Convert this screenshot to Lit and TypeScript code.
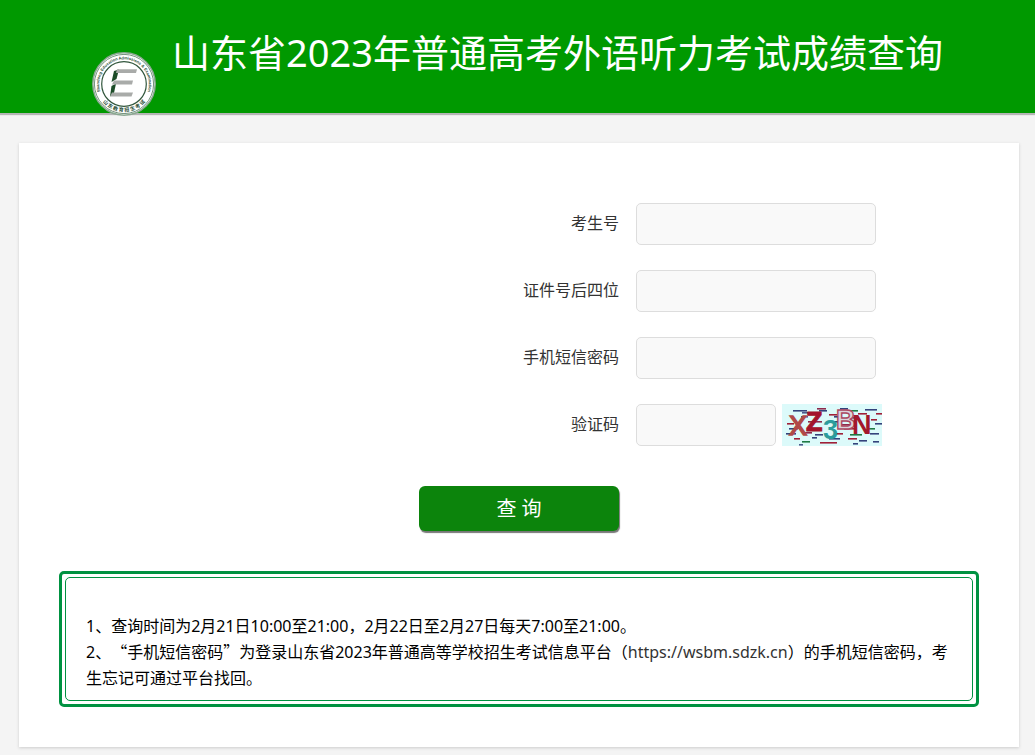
import { LitElement, html, svg, css } from "lit";
import { customElement, state } from "lit/decorators.js";

// Interference strokes of the verification image: x, y, width, colour.
const NOISE: [number, number, number, string][] = [
  [11, 6, 14, "#34437c"], [20, 8, 8, "#4d5a8c"], [35, 4, 9, "#8c2a4c"],
  [37, 6, 8, "#34437c"], [58, 4, 8, "#34437c"], [68, 6, 8, "#1f7a45"],
  [83, 5, 12, "#34437c"], [94, 9, 6, "#a02038"], [47, 10, 8, "#a02038"],
  [52, 12, 4, "#34437c"], [76, 9, 9, "#a02038"], [19, 12, 7, "#4d5a8c"],
  [65, 13, 9, "#34437c"], [89, 15, 6, "#a02038"],
  [93, 19, 7, "#34437c"], [5, 19, 7, "#a02038"], [26, 17, 14, "#8c2a4c"],
  [49, 17, 9, "#34437c"], [57, 20, 15, "#8c2a4c"], [7, 24, 9, "#34437c"],
  [62, 24, 12, "#a02038"], [85, 24, 8, "#1f7a45"],
  [4, 29, 10, "#34437c"], [22, 28, 8, "#8c2a4c"], [33, 30, 8, "#34437c"],
  [54, 29, 7, "#a02038"], [68, 30, 12, "#1f7a45"], [88, 29, 9, "#34437c"],
  [12, 34, 6, "#a02038"], [30, 33, 5, "#34437c"], [47, 34, 11, "#34437c"],
  [66, 34, 9, "#a02038"], [77, 36, 8, "#34437c"], [20, 37, 8, "#1f7a45"],
  [38, 38, 17, "#a02038"], [71, 39, 5, "#34437c"], [91, 37, 6, "#34437c"],
  [17, 40, 4, "#4d5a8c"],
];

@customElement("exam-emblem")
class ExamEmblem extends LitElement {
  static styles = css`
    :host { display: block; }
    .emblem { display: block; width: 64px; height: 64px; }
    .latin { font-family: "Liberation Sans", sans-serif; font-size: 4px; font-weight: 700; fill: #264c33; }
    .han { font-family: "Noto Sans CJK SC", sans-serif; font-size: 5px; font-weight: 700; fill: #264c33; }
  `;

  render() {
    return html`
      <svg class="emblem" viewBox="0 0 64 64" role="img" aria-label="山东教育招生考试">
        <defs>
          <path id="upper" d="M 10.5 44.5 A 24.8 24.8 0 1 1 53.5 44.5"></path>
          <path id="lower" d="M 8.5 47 A 28 28 0 0 0 55.5 47"></path>
        </defs>
        <circle cx="32" cy="32" r="31.2" fill="#fff" stroke="#8aa891" stroke-width="1.5"></circle>
        <circle cx="32" cy="32" r="29.6" fill="none" stroke="#4d7358" stroke-width=".8"></circle>
        <circle cx="32" cy="32" r="22.3" fill="#fff" stroke="#31563c" stroke-width="1.2"></circle>
        <text class="latin" text-anchor="middle"><textPath href="#upper" startOffset="50%">Shandong Education Admissions &amp; Examination</textPath></text>
        <text class="han" text-anchor="middle"><textPath href="#lower" startOffset="50%">山 东 教 育 招 生 考 试</textPath></text>
        <path d="M22 19 L27 17.5 L24.5 27 L19.5 30 Z" fill="#1c4c28"></path>
        <path d="M19.5 34 L24 31.5 L22 41 L18 44.5 Z" fill="#1c4c28"></path>
        <path d="M25 17.2 H45 L44 21 H24 Z" fill="#a9aba9"></path>
        <path d="M22 28.6 H41 L40 32.4 H20 Z" fill="#a9aba9"></path>
        <path d="M20 40.4 H41 L39.5 44.6 H18 Z" fill="#a9aba9"></path>
      </svg>
    `;
  }
}

@customElement("verify-image")
class VerifyImage extends LitElement {
  static styles = css`
    :host { display: block; }
    .image { display: block; width: 100px; height: 42px; }
    .glyph { font-family: "Liberation Sans", sans-serif; font-weight: 700; font-size: 27px; }
    .thin { font-weight: 400; }
  `;

  render() {
    return html`
      <svg class="image" viewBox="0 0 100 42" role="img" aria-label="验证码图片">
        <rect width="100" height="42" fill="#dcfafa"></rect>
        ${NOISE.map(([x, y, w, c]) => svg`<rect x=${x} y=${y} width=${w} height="1.6" fill=${c}></rect>`)}
        <text class="glyph thin" x="7" y="31" fill="#b04a48" stroke="#b04a48" stroke-width="1.6">X</text>
        <text class="glyph" x="24" y="27" fill="#a3142c" stroke="#a3142c">Z</text>
        <text class="glyph" x="41" y="35" fill="#2c9c9c">3</text>
        <text class="glyph" x="54" y="25" fill="#dcd4dc" stroke="#ab4862" stroke-width="1.4">B</text>
        <text class="glyph" x="70" y="30" fill="#a3182c">N</text>
      </svg>
    `;
  }
}

@customElement("app-root")
class AppRoot extends LitElement {
  static styles = css`
    :host {
      display: block;
      min-height: 100vh;
      background: #f4f4f4;
      color: #333;
      font: 16px/26px "Noto Sans", "Noto Sans CJK SC", sans-serif;
      text-spacing-trim: space-all;
    }
    * { box-sizing: border-box; }
    .header {
      display: flex;
      align-items: flex-start;
      gap: 16px;
      padding: 25px 80px 0 92px;
      background: #090;
      box-shadow: 0 2px 1px #b5b5b5;
    }
    .logo { flex: none; margin: 27px 0 -3px; }
    .title {
      margin: 0;
      color: #fff;
      font-size: 38px;
      line-height: 54px;
      font-weight: 400;
      white-space: nowrap;
    }
    .card {
      margin: 30px 16px 8px 19px;
      padding: 60px 40px 40px;
      background: #fff;
      box-shadow: 0 1px 3px #ccc;
    }
    .form { margin: 0 -40px; }
    .fields { display: grid; gap: 25px; }
    .row {
      display: grid;
      grid-template-columns: 60% 1fr;
      column-gap: 17px;
      align-items: center;
    }
    .label { padding-bottom: 2px; text-align: right; }
    .controls { display: flex; gap: 6px; }
    .input {
      width: 240px;
      height: 42px;
      padding: 0 10px;
      border: 1px solid #ddd;
      border-radius: 5px;
      background: #f9f9f9;
      color: #333;
      font: inherit;
    }
    .short { width: 140px; }
    .submit {
      display: block;
      width: 200px;
      height: 45px;
      margin: 40px auto;
      padding: 0;
      border: 0;
      border-radius: 6px;
      background: #0c840c;
      box-shadow: 1px 2px 1px #777;
      color: #fff;
      font: inherit;
      font-size: 20px;
      cursor: pointer;
    }
    .notice {
      padding: 3px;
      border: 3px solid #009241;
      border-radius: 5px;
    }
    .inner {
      padding: 35px 20px 9px;
      border: 1px solid #009241;
      border-radius: 5px;
      color: #000;
    }
    .line { margin: 0; }
    .cjk { font-family: "Noto Sans CJK SC", sans-serif; line-height: 1; }
    .link { color: #333; text-decoration: none; }
  `;

  @state() private values: Record<string, string> = {};

  private fields = [
    { id: "candidate", label: "考生号", type: "text" },
    { id: "idtail", label: "证件号后四位", type: "text" },
    { id: "sms", label: "手机短信密码", type: "password" },
    { id: "verify", label: "验证码", type: "text" },
  ];

  private setValue(id: string, e: Event) {
    this.values = { ...this.values, [id]: (e.target as HTMLInputElement).value };
  }

  render() {
    return html`
      <header class="header">
        <exam-emblem class="logo"></exam-emblem>
        <h1 class="title">山东省2023年普通高考外语听力考试成绩查询</h1>
      </header>
      <main class="card">
        <form class="form" @submit=${(e: Event) => e.preventDefault()}>
          <div class="fields">
            ${this.fields.map((f) => html`
              <div class="row">
                <label class="label" for=${f.id}>${f.label}</label>
                <div class="controls">
                  <input
                    class="input ${f.id === "verify" ? "short" : ""}"
                    id=${f.id}
                    type=${f.type}
                    .value=${this.values[f.id] ?? ""}
                    @input=${(e: Event) => this.setValue(f.id, e)}
                  />
                  ${f.id === "verify" ? html`<verify-image></verify-image>` : ""}
                </div>
              </div>
            `)}
          </div>
          <button class="submit" type="submit">查 询</button>
        </form>
        <section class="notice">
          <div class="inner">
            <p class="line">1、查询时间为2月21日10:00至21:00，2月22日至2月27日每天7:00至21:00。</p>
            <p class="line">2、<span class="cjk">“手机短信密码”</span>为登录山东省2023年普通高等学校招生考试信息平台（<a class="link" href="https://wsbm.sdzk.cn">https://wsbm.sdzk.cn</a>）的手机短信密码，考生忘记可通过平台找回。</p>
          </div>
        </section>
      </main>
    `;
  }
}
